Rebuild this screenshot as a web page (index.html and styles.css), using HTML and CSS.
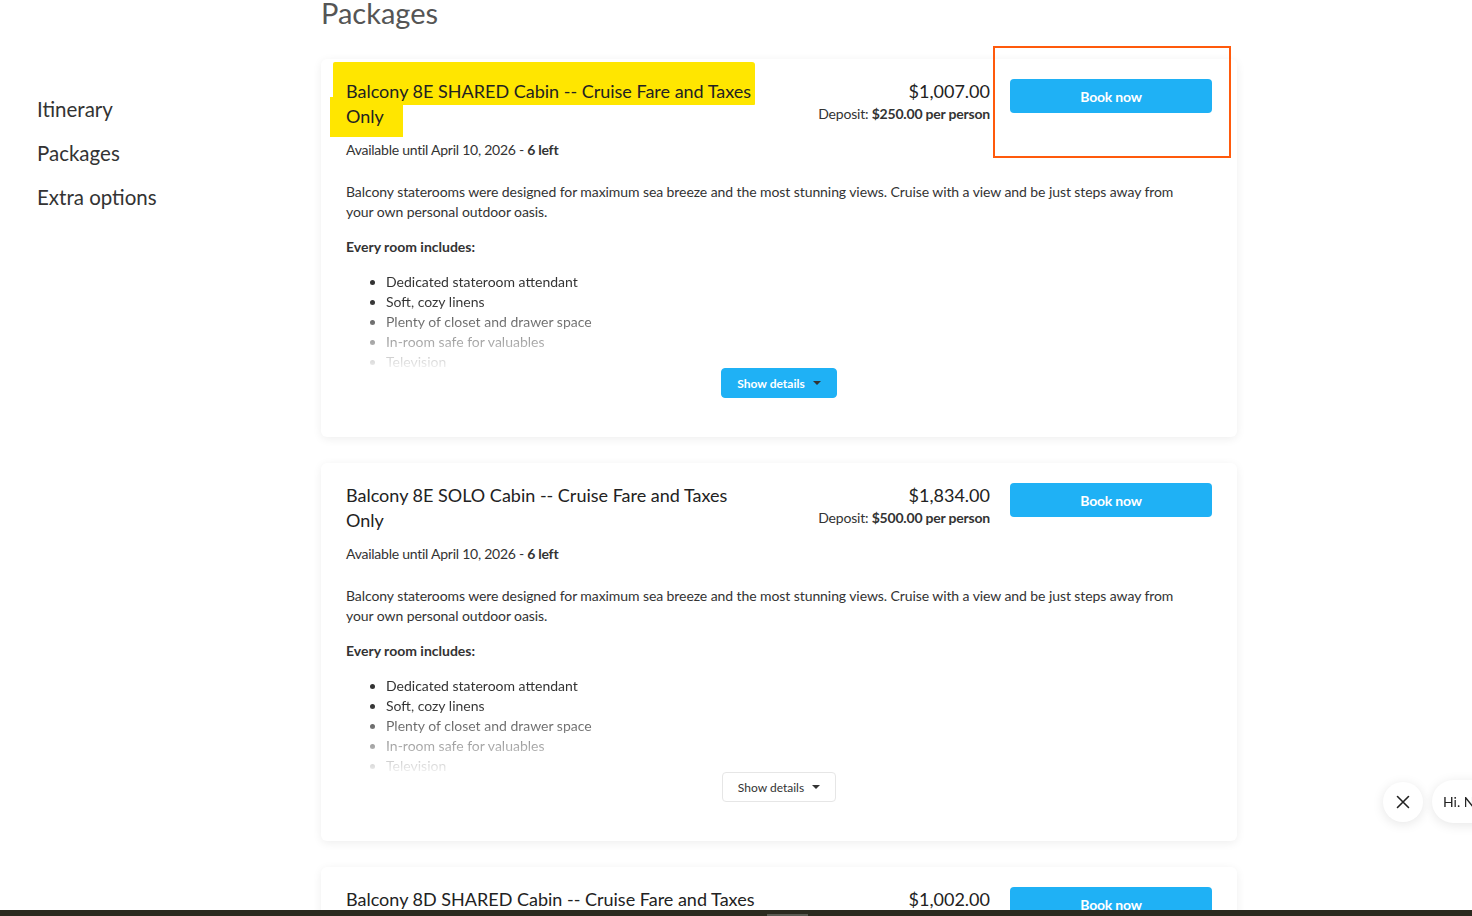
FILE: index.html
```html
<!DOCTYPE html>
<html lang="en">
<head>
    <meta charset="UTF-8">
    <meta name="viewport" content="width=device-width, initial-scale=1.0">
    <title>Packages</title>
    <link rel="stylesheet" href="styles.css">
</head>
<body>
    <div class="page">
        <nav class="side-nav">
            <a href="#itinerary">Itinerary</a>
            <a href="#packages">Packages</a>
            <a href="#extras">Extra options</a>
        </nav>

        <main class="content">
            <h2 class="section-title" id="packages">Packages</h2>

            <div class="package-card">
                <span class="marker marker-line1"></span>
                <span class="marker marker-line2"></span>
                <span class="callout"></span>
                <div class="package-head">
                    <h3 class="package-name">Balcony 8E SHARED Cabin -- Cruise Fare and Taxes Only</h3>
                    <div class="package-price">
                        <div class="price">$1,007.00</div>
                        <div class="deposit">Deposit: <b>$250.00 per person</b></div>
                    </div>
                    <button class="book-button">Book now</button>
                </div>
                <div class="availability">Available until April 10, 2026 - <b>6 left</b></div>
                <p class="description">Balcony staterooms were designed for maximum sea breeze and the most stunning views. Cruise with a view and be just steps away from your own personal outdoor oasis.</p>
                <div class="includes-title">Every room includes:</div>
                <ul class="includes">
                    <li>Dedicated stateroom attendant</li>
                    <li>Soft, cozy linens</li>
                    <li>Plenty of closet and drawer space</li>
                    <li>In-room safe for valuables</li>
                    <li>Television</li>
                    <li>Hair dryer</li>
                </ul>
                <div class="details-row">
                    <button class="details-button active">Show details <span class="caret"></span></button>
                </div>
            </div>

            <div class="package-card">
                <div class="package-head">
                    <h3 class="package-name">Balcony 8E SOLO Cabin -- Cruise Fare and Taxes Only</h3>
                    <div class="package-price">
                        <div class="price">$1,834.00</div>
                        <div class="deposit">Deposit: <b>$500.00 per person</b></div>
                    </div>
                    <button class="book-button">Book now</button>
                </div>
                <div class="availability">Available until April 10, 2026 - <b>6 left</b></div>
                <p class="description">Balcony staterooms were designed for maximum sea breeze and the most stunning views. Cruise with a view and be just steps away from your own personal outdoor oasis.</p>
                <div class="includes-title">Every room includes:</div>
                <ul class="includes">
                    <li>Dedicated stateroom attendant</li>
                    <li>Soft, cozy linens</li>
                    <li>Plenty of closet and drawer space</li>
                    <li>In-room safe for valuables</li>
                    <li>Television</li>
                    <li>Hair dryer</li>
                </ul>
                <div class="details-row">
                    <button class="details-button">Show details <span class="caret"></span></button>
                </div>
            </div>

            <div class="package-card">
                <div class="package-head">
                    <h3 class="package-name">Balcony 8D SHARED Cabin -- Cruise Fare and Taxes Only</h3>
                    <div class="package-price">
                        <div class="price">$1,002.00</div>
                        <div class="deposit">Deposit: <b>$250.00 per person</b></div>
                    </div>
                    <button class="book-button">Book now</button>
                </div>
                <div class="availability">Available until April 10, 2026 - <b>4 left</b></div>
                <p class="description">Balcony staterooms were designed for maximum sea breeze and the most stunning views. Cruise with a view and be just steps away from your own personal outdoor oasis.</p>
            </div>
        </main>
    </div>

    <!-- chat launcher -->
    <div class="chat-widget">
        <button class="chat-close" aria-label="Close">
            <svg width="14" height="14" viewBox="0 0 14 14">
                <path d="M1.5 1.5 L12.5 12.5 M12.5 1.5 L1.5 12.5" stroke="#222" stroke-width="1.6" fill="none" stroke-linecap="round"/>
            </svg>
        </button>
        <div class="chat-bubble">Hi. Need help planning your cruise?</div>
    </div>

    <div class="bottom-bar"><span class="bottom-tab"></span></div>
</body>
</html>
```

FILE: styles.css
```css
* {
    margin: 0;
    padding: 0;
    box-sizing: border-box;
}

body {
    font-family: "Lato", "Open Sans", "Liberation Sans", sans-serif;
    background: #fff;
    color: #333;
    overflow: hidden;
}

.page {
    display: flex;
    align-items: flex-start;
}

.side-nav {
    width: 321px;
    padding: 87px 0 0 37px;
    display: flex;
    flex-direction: column;
}

.side-nav a {
    font-size: 20.5px;
    line-height: 44px;
    color: #333;
    text-decoration: none;
}

.content {
    width: 916px;
}

.section-title {
    font-size: 29px;
    font-weight: 400;
    line-height: 36px;
    color: #555;
    margin-top: -5px;
    margin-bottom: 28px;
}

.package-card {
    position: relative;
    background: #fff;
    border-radius: 6px;
    box-shadow: 0 2px 10px rgba(0, 0, 0, 0.07);
    padding: 20px 25px 39px;
    margin-bottom: 26px;
}

/* highlighter strokes and the red call-out box */
.marker {
    position: absolute;
    background: #ffe600;
}

.marker-line1 {
    left: 12px;
    top: 3px;
    width: 422px;
    height: 43px;
    border-radius: 2px 3px 1px 1px;
}

.marker-line2 {
    left: 9px;
    top: 38px;
    width: 73px;
    height: 40px;
}

.callout {
    position: absolute;
    left: 672px;
    top: -13px;
    width: 238px;
    height: 112px;
    border: 2px solid #ff5a0c;
    z-index: 2;
}

.package-head {
    position: relative;
    display: flex;
    align-items: flex-start;
}

.package-name {
    flex: 1;
    font-size: 18px;
    font-weight: 400;
    line-height: 25px;
    color: #222;
    padding-right: 50px;
}

.package-price {
    text-align: right;
    white-space: nowrap;
}

.price {
    font-size: 18px;
    line-height: 24px;
    color: #222;
}

.deposit {
    font-size: 14px;
    line-height: 20px;
    color: #333;
    margin-top: 1px;
    letter-spacing: -0.2px;
}

.book-button {
    width: 202px;
    height: 34px;
    margin-left: 20px;
    border: none;
    border-radius: 4px;
    background: #1fb1f5;
    color: #fff;
    font-family: inherit;
    font-size: 14px;
    font-weight: 700;
    letter-spacing: -0.2px;
    cursor: pointer;
}

.availability {
    margin-top: 11px;
    font-size: 14px;
    line-height: 20px;
    letter-spacing: -0.25px;
}

.description {
    margin-top: 22px;
    padding-right: 30px;
    font-size: 14px;
    line-height: 20px;
    letter-spacing: -0.08px;
}

.includes-title {
    margin-top: 15px;
    font-size: 14px;
    line-height: 20px;
    font-weight: 700;
}

.includes {
    margin-top: 15px;
    padding-left: 40px;
    font-size: 14px;
    line-height: 20px;
    height: 96px;
    overflow: hidden;
    -webkit-mask-image: linear-gradient(to bottom, #000 0%, #000 30%, rgba(0, 0, 0, 0.08) 100%);
    mask-image: linear-gradient(to bottom, #000 0%, #000 30%, rgba(0, 0, 0, 0.08) 100%);
}

.details-row {
    display: flex;
    justify-content: center;
}

.details-button {
    display: flex;
    align-items: center;
    gap: 8px;
    height: 30px;
    padding: 0 15px;
    border: 1px solid #e6e6e6;
    border-radius: 4px;
    background: #fff;
    color: #333;
    font-family: inherit;
    font-size: 12px;
    cursor: pointer;
}

.details-button.active {
    background: #1fb1f5;
    border-color: #1fb1f5;
    color: #fff;
    font-weight: 700;
}

.caret {
    width: 0;
    height: 0;
    border-left: 4px solid transparent;
    border-right: 4px solid transparent;
    border-top: 4px solid #333;
}

.chat-widget {
    position: fixed;
    left: 1383px;
    top: 780px;
    display: flex;
    align-items: center;
    gap: 9px;
    white-space: nowrap;
}

.chat-close {
    width: 40px;
    height: 40px;
    border-radius: 50%;
    border: none;
    background: #fff;
    box-shadow: 0 2px 12px rgba(0, 0, 0, 0.1);
    display: flex;
    align-items: center;
    justify-content: center;
}

.chat-bubble {
    height: 43px;
    padding: 0 18px 0 11px;
    border-radius: 22px;
    background: #fff;
    box-shadow: 0 2px 12px rgba(0, 0, 0, 0.1);
    font-size: 14px;
    line-height: 43px;
    color: #222;
}

.bottom-bar {
    position: fixed;
    left: 0;
    right: 0;
    bottom: 0;
    height: 6px;
    background: #2b2a1f;
}

.bottom-tab {
    position: absolute;
    left: 767px;
    bottom: 0;
    width: 41px;
    height: 2px;
    background: #5a5a52;
}
```
